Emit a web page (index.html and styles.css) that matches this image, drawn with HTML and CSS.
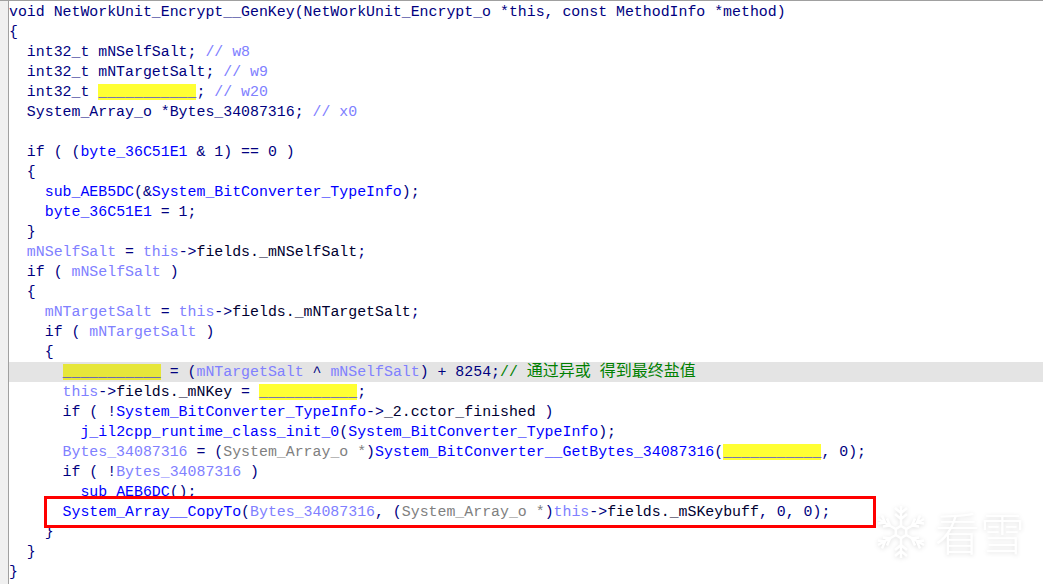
FILE: index.html
```html
<!DOCTYPE html>
<html lang="en">
<head>
<meta charset="utf-8">
<title>NetWorkUnit_Encrypt__GenKey</title>
<link rel="stylesheet" href="styles.css">
</head>
<body>
<div class="view">
<div class="gutter"></div>
<div class="code">
<div class="line">void NetWorkUnit_Encrypt__GenKey(NetWorkUnit_Encrypt_o *this, const MethodInfo *method)</div>
<div class="line">{</div>
<div class="line">  int32_t mNSelfSalt; <i>// w8</i></div>
<div class="line">  int32_t mNTargetSalt; <i>// w9</i></div>
<div class="line">  int32_t <mark>___________</mark>; <i>// w20</i></div>
<div class="line">  System_Array_o *Bytes_34087316; <i>// x0</i></div>
<div class="line"> </div>
<div class="line">  if ( (<b>byte_36C51E1</b> &amp; 1) == 0 )</div>
<div class="line">  {</div>
<div class="line">    <b>sub_AEB5DC</b>(&amp;<b>System_BitConverter_TypeInfo</b>);</div>
<div class="line">    <b>byte_36C51E1</b> = 1;</div>
<div class="line">  }</div>
<div class="line">  <u>mNSelfSalt</u> = <u>this</u>-&gt;<var>fields._mNSelfSalt</var>;</div>
<div class="line">  if ( <u>mNSelfSalt</u> )</div>
<div class="line">  {</div>
<div class="line">    <u>mNTargetSalt</u> = <u>this</u>-&gt;<var>fields._mNTargetSalt</var>;</div>
<div class="line">    if ( <u>mNTargetSalt</u> )</div>
<div class="line">    {</div>
<div class="line current">      <mark>___________</mark> = (<u>mNTargetSalt</u> ^ <u>mNSelfSalt</u>) + 8254;<em>// <span class="cjk">通过异或</span> <span class="cjk">得到最终盐值</span></em></div>
<div class="line">      <u>this</u>-&gt;<var>fields._mNKey</var> = <mark>___________</mark>;</div>
<div class="line">      if ( !<b>System_BitConverter_TypeInfo</b>-&gt;<var>_2.cctor_finished</var> )</div>
<div class="line">        <b>j_il2cpp_runtime_class_init_0</b>(<b>System_BitConverter_TypeInfo</b>);</div>
<div class="line">      <u>Bytes_34087316</u> = (<s>System_Array_o *</s>)<b>System_BitConverter__GetBytes_34087316</b>(<mark>___________</mark>, 0);</div>
<div class="line">      if ( !<u>Bytes_34087316</u> )</div>
<div class="line">        <b>sub_AEB6DC</b>();</div>
<div class="line">      <b>System_Array__CopyTo</b>(<u>Bytes_34087316</u>, (<s>System_Array_o *</s>)<u>this</u>-&gt;<var>fields._mSKeybuff</var>, 0, 0);</div>
<div class="line">    }</div>
<div class="line">  }</div>
<div class="line">}</div>
</div>
<div class="callout"></div>
<div class="watermark">
<svg class="flake" viewBox="0 0 50 56" width="50" height="56" aria-hidden="true">
<g class="flake-arms">
<path d="M25 22V2M25 9l-6-5M25 9l6-5M25 15l-6-5M25 15l6-5"/>
<path d="M25 34v20M25 47l-6 5M25 47l6 5M25 41l-6 5M25 41l6 5"/>
<path d="M19.800 25L2 15M9 18.500l-7 1M9 18.500l-3-7M14 21.500l-7 1M14 21.500l-3-7"/>
<path d="M30.200 25L48 15M41 18.500l7 1M41 18.500l3-7M36 21.500l7 1M36 21.500l3-7"/>
<path d="M19.800 31L2 41M9 37.500l-7-1M9 37.500l-3 7M14 34.500l-7-1M14 34.500l-3 7"/>
<path d="M30.200 31L48 41M41 37.500l7-1M41 37.500l3 7M36 34.500l7-1M36 34.500l3 7"/>
<path d="M25 22l5.200 3v6L25 34l-5.200-3v-6z"/>
</g>
</svg>
<span class="brand">看雪</span>
</div>
</div>
</body>
</html>
```
FILE: styles.css
```css
html, body {
  margin: 0;
  height: 100%;
  background: #fff;
  overflow: hidden;
}
.view {
  position: relative;
  display: flex;
  box-sizing: border-box;
  height: 584px;
  border-top: 1px solid #a0a0a0;
}
.gutter {
  width: 8px;
  flex: none;
  background: #f0f0f0;
  border-right: 1px solid #a0a0a0;
}
.code {
  flex: 1;
  padding-top: 1px;
  font-family: "Liberation Mono", monospace;
  font-size: 14.89px;
  color: #000080;
}
.line {
  height: 20px;
  line-height: 20px;
  white-space: pre;
}
.line.current {
  background: #e4e4e4;
}
.line b {
  font-weight: normal;
  color: #0000ff;
}
.line i {
  font-style: normal;
  color: #8080ff;
}
.line u {
  text-decoration: none;
  color: #8080ff;
}
.line s {
  text-decoration: none;
  color: #808080;
}
.line var {
  font-style: normal;
  color: #000030;
}
.line em {
  font-style: normal;
  color: #008000;
}
.line .cjk {
  font-family: "Noto Sans CJK SC", sans-serif;
  font-size: 16px;
  line-height: 0;
}
.line mark {
  background: #ffff33;
  color: #0000ff;
}
.line.current mark {
  background: #e6e63a;
}
.callout {
  position: absolute;
  left: 44px;
  top: 495px;
  width: 826px;
  height: 26px;
  border: 3px solid #ff0000;
}
.watermark {
  position: absolute;
  left: 876px;
  top: 503px;
  display: flex;
  align-items: center;
  gap: 9px;
  filter: drop-shadow(0 1px 2px rgba(0, 0, 0, 0.12));
}
.flake-arms {
  fill: none;
  stroke: #fff;
  stroke-width: 2.5;
}
.brand {
  font-family: "Noto Sans CJK SC", sans-serif;
  font-weight: 300;
  font-size: 45px;
  line-height: 56px;
  color: #fff;
}
```
